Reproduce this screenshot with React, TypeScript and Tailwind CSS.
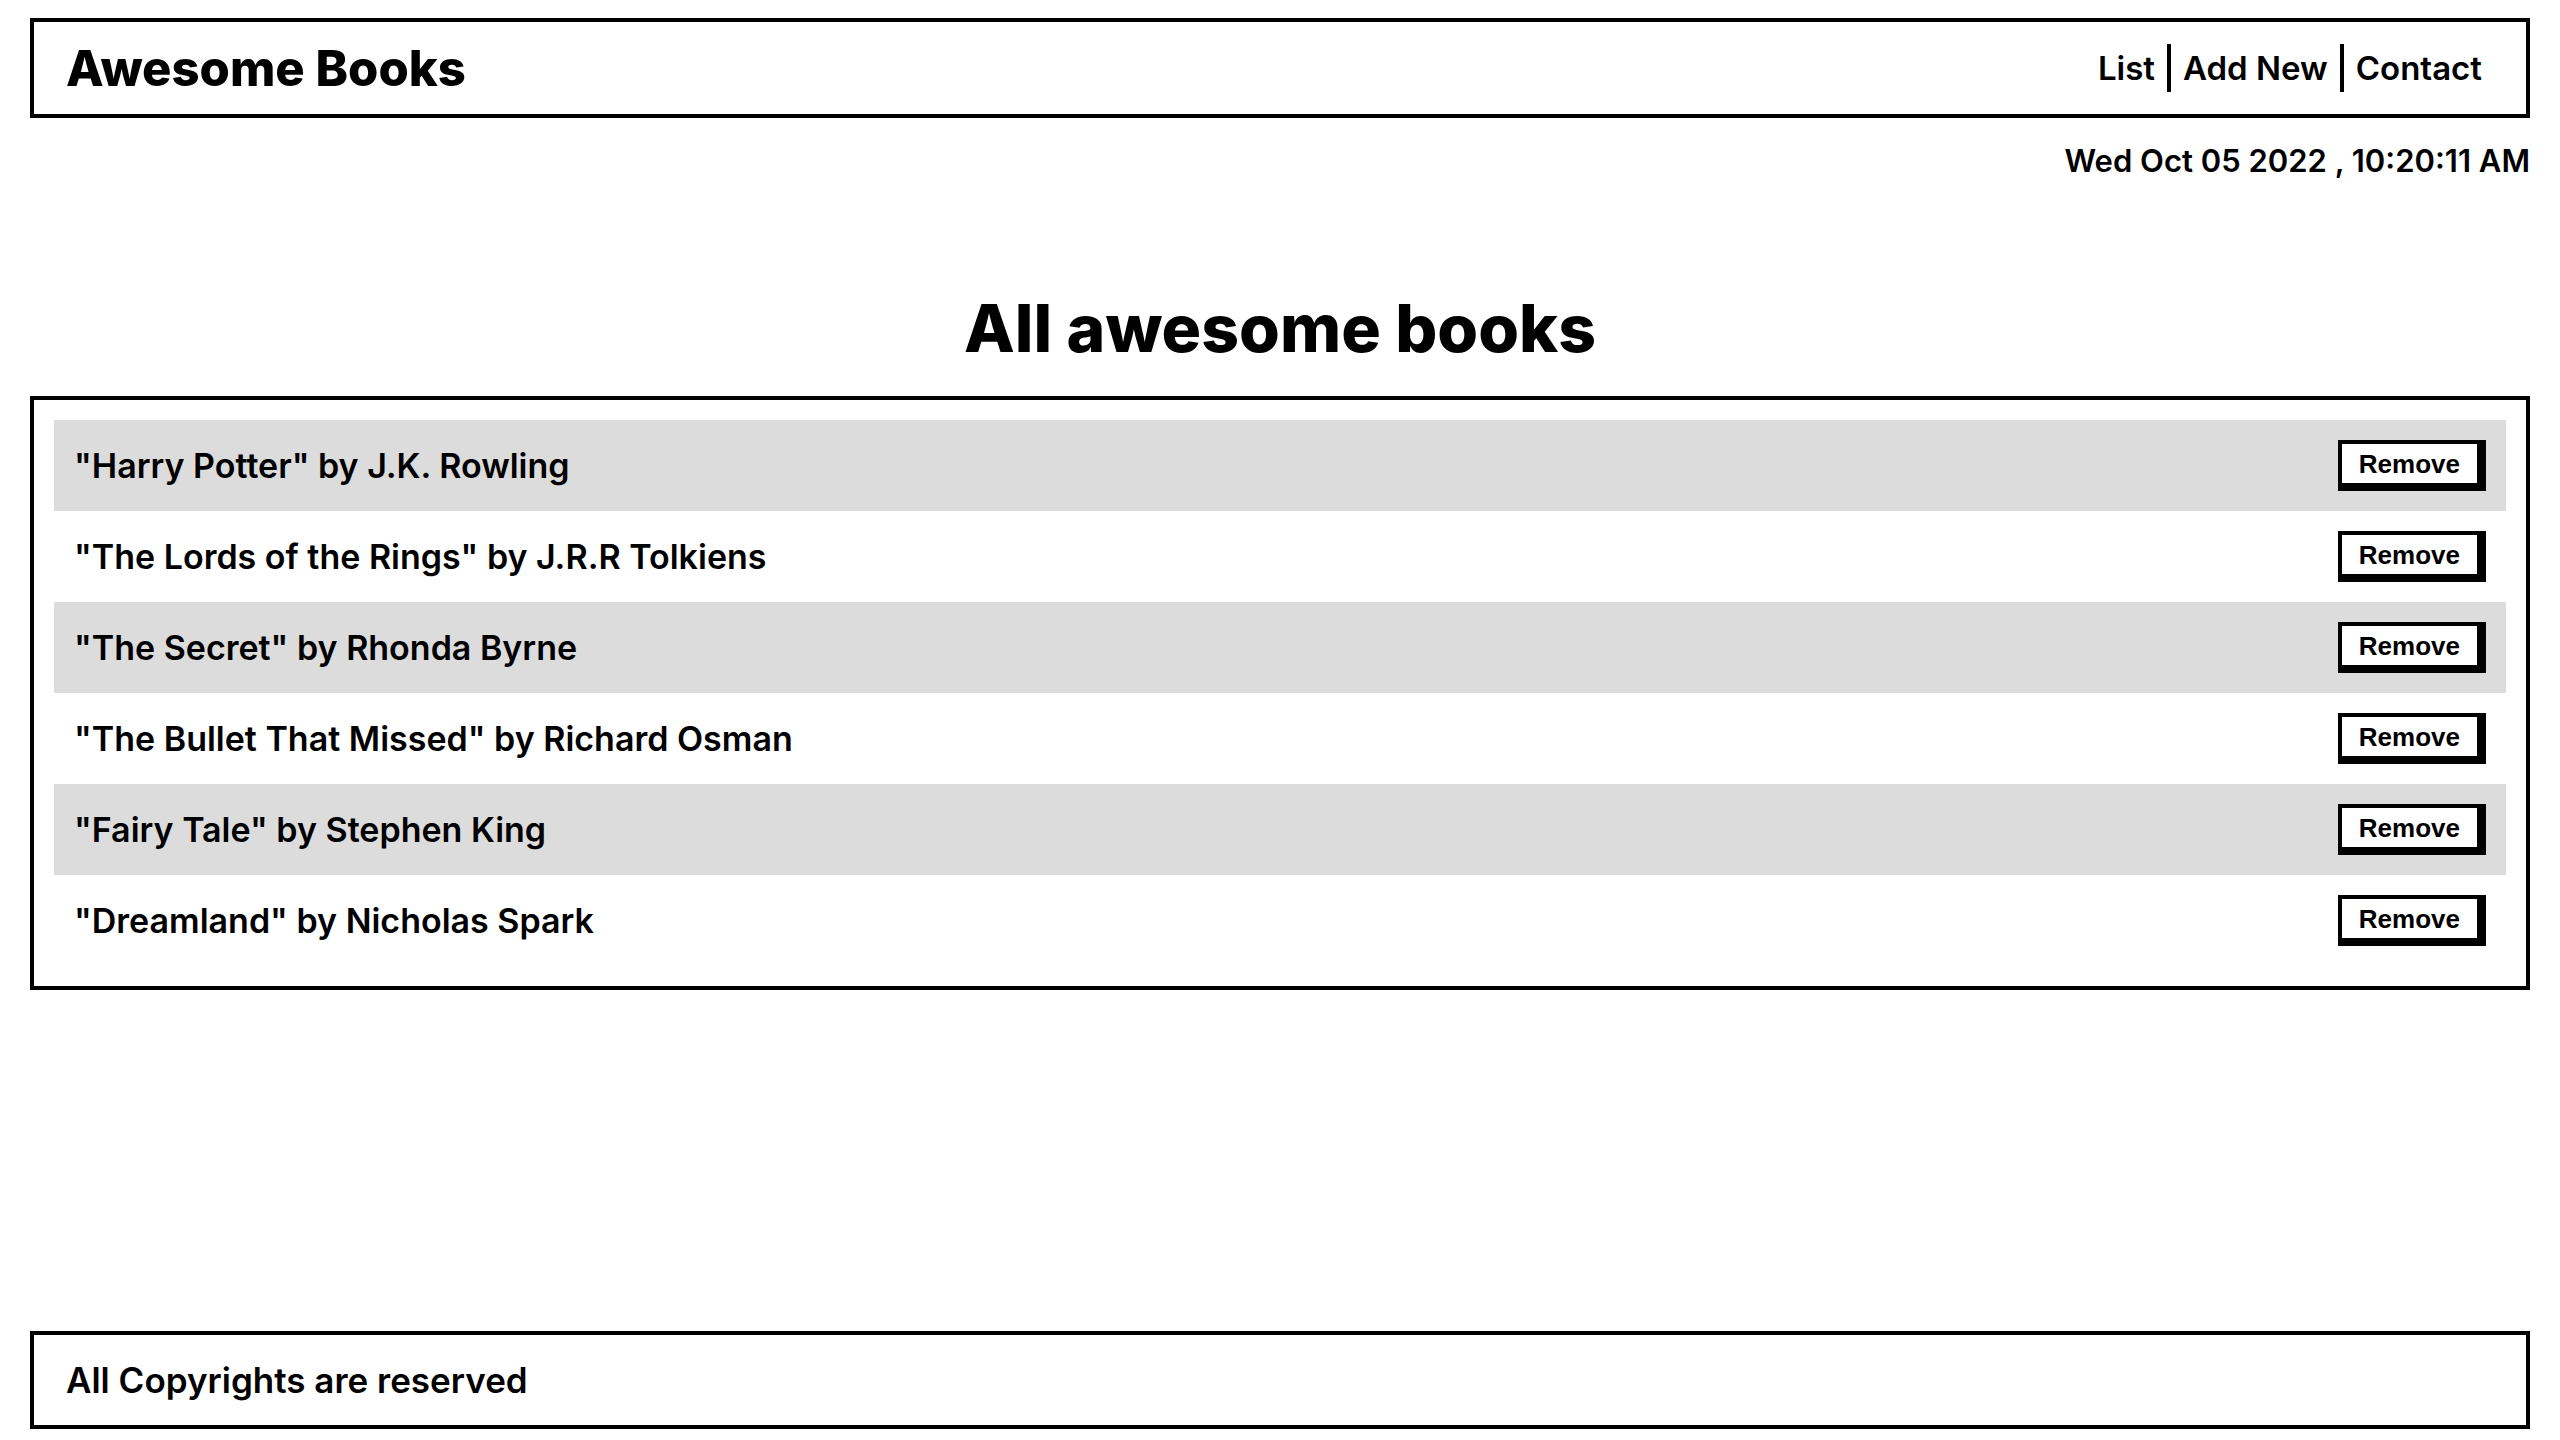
const books = [
  { title: 'Harry Potter', author: 'J.K. Rowling' },
  { title: 'The Lords of the Rings', author: 'J.R.R Tolkiens' },
  { title: 'The Secret', author: 'Rhonda Byrne' },
  { title: 'The Bullet That Missed', author: 'Richard Osman' },
  { title: 'Fairy Tale', author: 'Stephen King' },
  { title: 'Dreamland', author: 'Nicholas Spark' },
];

function Header() {
  return (
    <header className="flex items-center justify-between h-[100px] border-4 border-black px-[32px]">
      <h2 className="text-[49px] font-extrabold leading-none">Awesome Books</h2>
      <ul className="flex items-center text-[33px] font-semibold leading-[48px]">
        <li className="px-3 border-r-4 border-black">List</li>
        <li className="px-3 border-r-4 border-black">Add New</li>
        <li className="px-3">Contact</li>
      </ul>
    </header>
  );
}

function BookRow({ title, author, odd }: { title: string; author: string; odd: boolean }) {
  return (
    <li className={`flex items-center justify-between h-[91px] px-[20px] ${odd ? 'bg-[#dcdcdc]' : 'bg-white'}`}>
      <p className="text-[34px] font-semibold">
        "{title}" by {author}
      </p>
      <button className="bg-white border-black border-t-4 border-l-4 border-r-[9px] border-b-[8px] px-[17px] h-[51px] text-[26px] font-bold font-['Liberation_Sans',Arial,sans-serif] leading-none">
        Remove
      </button>
    </li>
  );
}

export default function App() {
  return (
    <div className="min-h-screen flex flex-col px-[30px] pt-[18px] pb-[11px] bg-white text-black font-['Inter',sans-serif]">
      <Header />
      <p className="mt-[20px] text-right text-[31px] font-semibold leading-[46px]">Wed Oct 05 2022 , 10:20:11 AM</p>
      <main className="flex flex-col">
        <h1 className="mt-[96px] text-center text-[66px] font-extrabold leading-[96px]">All awesome books</h1>
        <ul className="mt-[20px] border-4 border-black p-[20px]">
          {books.map((b, i) => (
            <BookRow key={b.title} title={b.title} author={b.author} odd={i % 2 === 0} />
          ))}
        </ul>
      </main>
      <footer className="mt-auto h-[98px] flex items-center border-4 border-black px-[32px]">
        <p className="text-[35px] font-semibold">All Copyrights are reserved</p>
      </footer>
    </div>
  );
}
